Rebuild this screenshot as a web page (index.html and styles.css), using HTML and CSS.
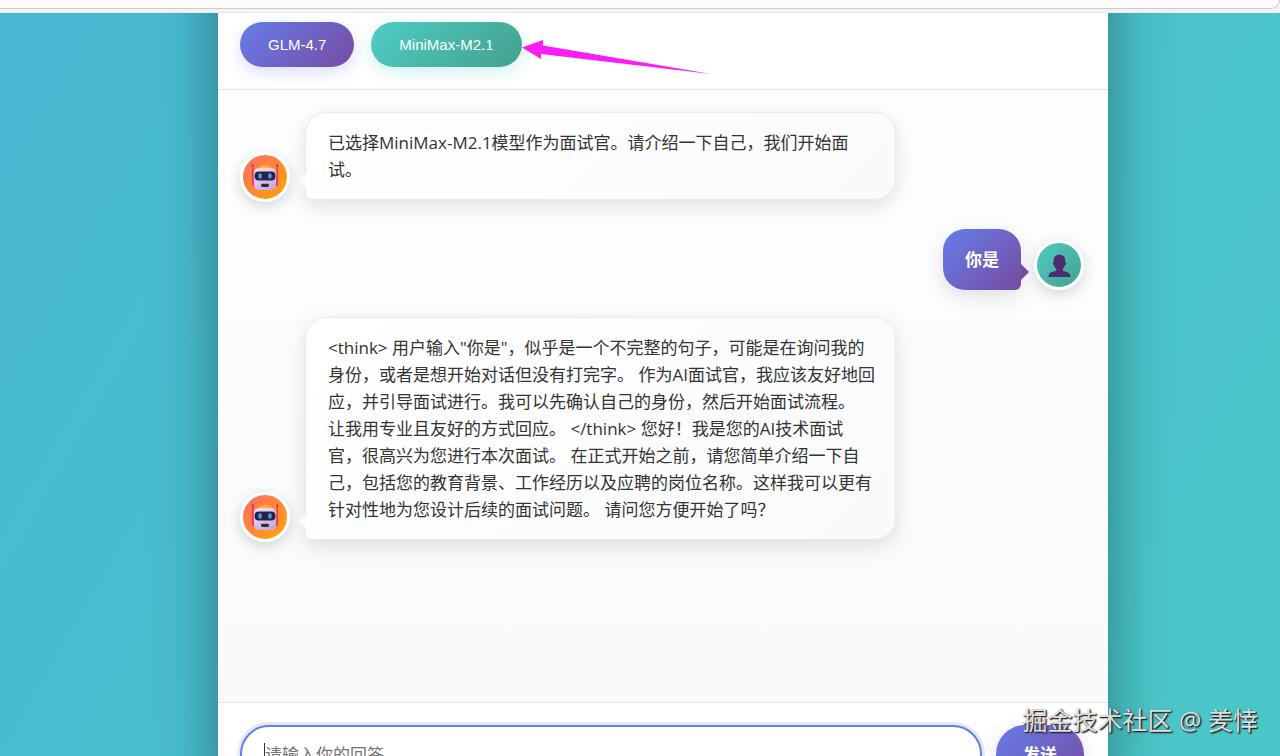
FILE: index.html
```html
<!DOCTYPE html>
<html lang="zh-CN">
<head>
<meta charset="utf-8">
<title>AI 面试官</title>
<link rel="stylesheet" href="styles.css">
</head>
<body>
<svg class="defs" aria-hidden="true">
  <defs>
    <linearGradient id="face" x1="0" y1="0" x2="0.6" y2="1"><stop offset="0" stop-color="#f1e7f6"/><stop offset="1" stop-color="#c9a9dd"/></linearGradient>
    <symbol id="robot" viewBox="0 0 28 28">
      <path d="M12 2.600q2-1.400 4 0l4 1v3H8v-3z" fill="#ffb42b"/>
      <path d="M1.700 3v19M26.300 3v19" stroke="#dc3461" stroke-width="1.300"/>
      <circle cx="1.700" cy="2.400" r="1.200" fill="#d92e55"/><circle cx="26.300" cy="2.400" r="1.200" fill="#d92e55"/>
      <path d="M.8 14h3.400v9H3a2.200 2.200 0 0 1-2.200-2.200zM27.200 14h-3.400v9H25a2.200 2.200 0 0 0 2.200-2.200z" fill="#e8406a"/>
      <path d="M8 5h12q5 0 5 6v10q0 6-5 6H8q-5 0-5-6V11q0-6 5-6z" fill="url(#face)"/>
      <rect x="3.600" y="8.600" width="20.800" height="8.800" rx="4" fill="#2b2142"/>
      <rect x="7.300" y="10.200" width="3.600" height="5.600" rx="1.800" fill="#3f9ce8"/><rect x="17.100" y="10.200" width="3.600" height="5.600" rx="1.800" fill="#3f9ce8"/>
      <rect x="10" y="20.800" width="8" height="3.200" rx="1.400" fill="#33264b"/>
    </symbol>
  </defs>
</svg>
<div class="chrome"><div class="toolbar"></div></div>
<div class="stage">
  <main class="chat">
    <header class="models">
      <button class="model glm" type="button">GLM-4.7</button>
      <button class="model minimax" type="button">MiniMax-M2.1</button>
      <svg class="pointer" viewBox="0 0 192 40" aria-hidden="true"><path d="M1 9.500 22 2v5.500L190 36 20 16v5z" fill="#fb1cf6"/></svg>
    </header>
    <section class="messages">
      <article class="message bot">
        <span class="avatar"><svg class="robot"><use href="#robot"/></svg></span>
        <p class="bubble">已选择MiniMax-M2.1模型作为面试官。请介绍一下自己，我们开始面试。</p>
      </article>
      <article class="message user">
        <p class="bubble">你是</p>
        <span class="avatar"><svg class="person" viewBox="0 0 24 26"><path d="M6 8C5.600 3 8 .8 12 .8S18.400 3 18 8q1 0 .7 2-.2 2-1.200 2-.6 2.300-2 3.500v2l5 1.500q2.700 1 3 5H.5q.3-4 3-5l5-1.500v-2Q7 14.300 6.500 12q-1 0-1.200-2Q5 8 6 8z" fill="#4d2d72"/></svg></span>
      </article>
      <article class="message bot">
        <span class="avatar"><svg class="robot"><use href="#robot"/></svg></span>
        <p class="bubble">&lt;think&gt; 用户输入"你是"，似乎是一个不完整的句子，可能是在询问我的身份，或者是想开始对话但没有打完字。 作为AI面试官，我应该友好地回应，并引导面试进行。我可以先确认自己的身份，然后开始面试流程。 让我用专业且友好的方式回应。 &lt;/think&gt; 您好！我是您的AI技术面试官，很高兴为您进行本次面试。 在正式开始之前，请您简单介绍一下自己，包括您的教育背景、工作经历以及应聘的岗位名称。这样我可以更有针对性地为您设计后续的面试问题。 请问您方便开始了吗？</p>
      </article>
    </section>
    <form class="composer">
      <label class="field"><input class="answer" type="text" aria-label="回答" placeholder="请输入你的回答"></label>
      <button class="send" type="button">发送</button>
    </form>
  </main>
</div>
<div class="watermark">掘金技术社区 @ 羑悻</div>
</body>
</html>
```
FILE: styles.css
```css
* { box-sizing: border-box; }
body {
  margin: 0;
  height: 100vh;
  overflow: hidden;
  display: flex;
  flex-direction: column;
  font: 17px/27px "Open Sans", "Noto Sans CJK SC", sans-serif;
  color: #333;
}
.defs { position: absolute; width: 0; height: 0; }
.chrome { flex: none; height: 13px; background: #f3f3f4; border-bottom: 1px solid #e9eaeb; }
.toolbar { height: 9px; background: #fcfcfd; border: solid #ccc; border-width: 0 1px 1px 0; border-radius: 0 0 12px 0; }
.stage {
  flex: 1;
  min-height: 0;
  overflow: clip;
  display: grid;
  grid-template-columns: 218fr 890fr 172fr;
  background: linear-gradient(120deg, #47b9d1, #4bc7c9);
}
/* The card runs past the top and bottom of the visible area. */
.chat {
  grid-column: 2;
  display: flex;
  flex-direction: column;
  margin: -80px 0 -49px;
  padding-top: 80px;
  background: #fff;
  box-shadow: 0 0 56px rgba(0, 0, 0, .38);
}
.models {
  display: flex;
  align-items: flex-start;
  gap: 17px;
  padding: 9px 22px 22px;
  border-bottom: 1px solid #dfe2e6;
}
.model {
  height: 45px;
  padding: 0 28px;
  border: 0;
  border-radius: 23px;
  color: #fff;
  font: 15px/43px "Liberation Sans", sans-serif;
}
.glm { background: linear-gradient(135deg, #667eea, #764ba2); box-shadow: 0 5px 16px rgba(102, 126, 234, .25); }
.minimax { background: linear-gradient(135deg, #4ecdc4, #44a08d); box-shadow: 0 5px 16px rgba(78, 205, 196, .28); }
.pointer { width: 192px; height: 40px; margin: 16px 0 -16px -18px; }
.messages {
  flex: 1;
  min-height: 0;
  display: flex;
  flex-direction: column;
  gap: 27px;
  padding: 22px 24px 22px 22px;
  background: linear-gradient(180deg, #fdfeff, #f9fafc);
}
.message { display: flex; align-items: flex-end; gap: 15px; }
.user { justify-content: flex-end; gap: 13px; }
.avatar {
  flex: none;
  display: grid;
  place-items: center;
  width: 50px;
  height: 50px;
  border: 3px solid #fff;
  border-radius: 50%;
  box-shadow: 0 4px 14px rgba(0, 0, 0, .17);
}
.bot .avatar { background: linear-gradient(135deg, #ff6b6b, #ffa500); }
.user .avatar { background: linear-gradient(135deg, #4ecdc4, #44a08d); }
.robot { width: 28px; height: 28px; }
.person { width: 23px; height: 25px; margin-top: 3px; }
.bubble {
  position: relative;
  max-width: 70%;
  margin: 0;
  padding: 16px 19px 16px 22px;
  border: 1px solid #e8ebed;
  border-radius: 22px;
  box-shadow: 0 6px 20px rgba(0, 0, 0, .12);
}
.bubble::after { content: ""; position: absolute; bottom: 10px; border: 8px solid transparent; }
.bot .bubble { margin-bottom: 2px; border-bottom-left-radius: 6px; background: linear-gradient(135deg, #fff, #f9fafb); }
.bot .bubble::after { right: 100%; border-left: 0; border-right-color: #fafbfc; }
.user .bubble {
  padding: 17px 22px;
  border: 0;
  border-bottom-right-radius: 6px;
  background: linear-gradient(135deg, #667eea, #764ba2);
  color: #fff;
  font-weight: 600;
}
.user .bubble::after { left: 100%; border-right: 0; border-left-color: #764ba2; }
.composer {
  display: flex;
  gap: 14px;
  padding: 22px 24px 22px 22px;
  border-top: 1px solid #dfe2e6;
}
.field { flex: 1; min-width: 0; position: relative; }
/* Text caret of the active field. */
.field::after { content: ""; position: absolute; left: 24px; top: 18px; width: 1px; height: 22px; background: #333; }
.answer, .send { height: 58px; border-radius: 29px; font: inherit; }
.answer {
  display: block;
  width: 100%;
  padding: 0 23px;
  border: 2px solid #667eea;
  background: #fff;
  box-shadow: 0 0 0 3px rgba(102, 126, 234, .18);
  outline: 0;
}
.answer::placeholder { color: #757575; }
.send {
  padding: 0 27px;
  border: 0;
  background: linear-gradient(135deg, #667eea, #764ba2);
  box-shadow: 0 4px 16px rgba(102, 126, 234, .25);
  color: #fff;
  font-weight: 700;
}
.watermark {
  position: absolute;
  right: 22px;
  bottom: 18px;
  color: #dcdfe0;
  font-size: 25px;
  line-height: 36px;
  text-shadow: 1px 1px 1px #222, 1px 1px 2px #333;
}
```
